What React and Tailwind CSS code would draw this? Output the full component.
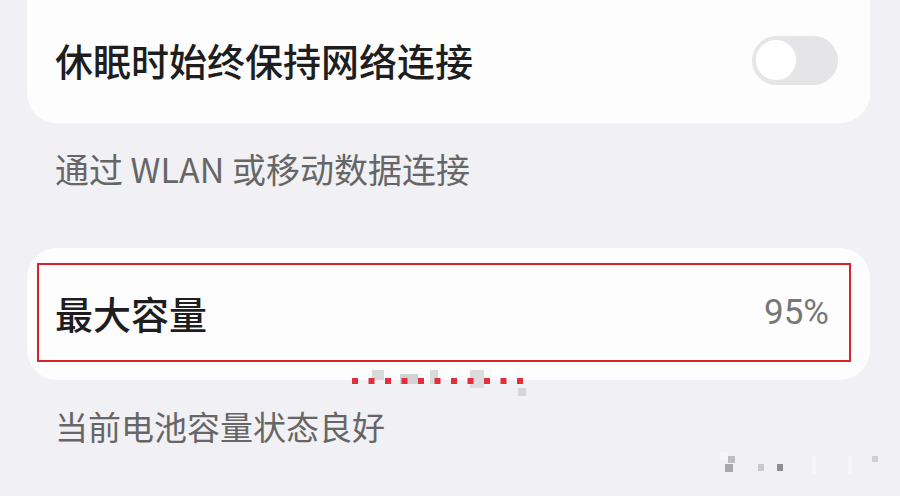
import React from 'react';

const font = { fontFamily: '"Noto Sans CJK SC", "Noto Sans", sans-serif' };

function Toggle() {
  return (
    <div className="w-[86px] h-[49px] rounded-full bg-[#e5e5e7] flex items-center pl-[1px]">
      <div className="w-[46px] h-[46px] rounded-full bg-white border-[3px] border-[#e6e6e8]" />
    </div>
  );
}

// red dotted underline with the blurred mosaic under it
function MarkLine() {
  return (
    <svg width="200" height="40" viewBox="0 0 200 40">
      <rect x="20" y="0" width="12" height="10" fill="#d9d9dc" />
      <rect x="48" y="4" width="18" height="10" fill="#d2d2d5" />
      <rect x="78" y="-2" width="8" height="16" fill="#dadadd" />
      <rect x="118" y="0" width="14" height="18" fill="#dcdcdf" />
      {Array.from({ length: 11 }).map((_, i) => (
        <rect key={i} x={i * 16.5} y="8" width="6" height="6" fill="#e0303c" />
      ))}
      <rect x="166" y="18" width="8" height="8" fill="#d5d5d8" />
    </svg>
  );
}

function Mosaic() {
  return (
    <svg width="170" height="30" viewBox="0 0 170 30">
      <rect x="0" y="0" width="8" height="8" fill="#f6f6f8" />
      <rect x="8" y="4" width="7" height="7" fill="#bdbdc0" />
      <rect x="5" y="12" width="8" height="8" fill="#a9a9ac" />
      <rect x="38" y="12" width="6" height="7" fill="#c9c9cc" />
      <rect x="57" y="12" width="6" height="7" fill="#8e8e91" />
      <rect x="92" y="4" width="4" height="18" fill="#f7f7f9" />
      <rect x="128" y="4" width="4" height="18" fill="#f7f7f9" />
      <rect x="152" y="4" width="6" height="6" fill="#cfcfd2" />
    </svg>
  );
}

export default function App() {
  return (
    <div className="w-[900px] h-[496px] overflow-hidden bg-[#f1f1f5] pl-[27px] pr-[30px] flex flex-col" style={font}>
      <div className="h-[123px] bg-[#fdfdfd] rounded-b-[30px] flex items-center justify-between pl-[28px] pr-[32px] pb-[3px]">
        <span className="text-[38px] font-medium text-[#1e1e1e] leading-none">休眠时始终保持网络连接</span>
        <Toggle />
      </div>

      <div className="mt-[25px] pl-[28px] text-[34px] leading-[41px] text-[#666666]">通过 WLAN 或移动数据连接</div>

      <div className="relative mt-[59px] h-[132px] bg-[#fdfdfd] rounded-[30px] pl-[10px] pr-[19px] pt-[15px]">
        <div className="h-[99px] border-2 border-[#d8232f] flex items-center justify-between pl-[16px] pr-[20px]">
          <span className="text-[38px] font-medium text-[#1e1e1e] leading-none">最大容量</span>
          <span className="text-[35px] text-[#777777] leading-none" style={{ fontFamily: 'Roboto, "Noto Sans", sans-serif' }}>95%</span>
        </div>
        <div className="absolute left-[325px] top-[122px]">
          <MarkLine />
        </div>
      </div>

      <div className="mt-[26px] pl-[28px] flex items-start justify-between">
        <span className="text-[33px] leading-[41px] text-[#666666]">当前电池容量状态良好</span>
        <div className="mt-[46px] mr-[-20px]">
          <Mosaic />
        </div>
      </div>
    </div>
  );
}
